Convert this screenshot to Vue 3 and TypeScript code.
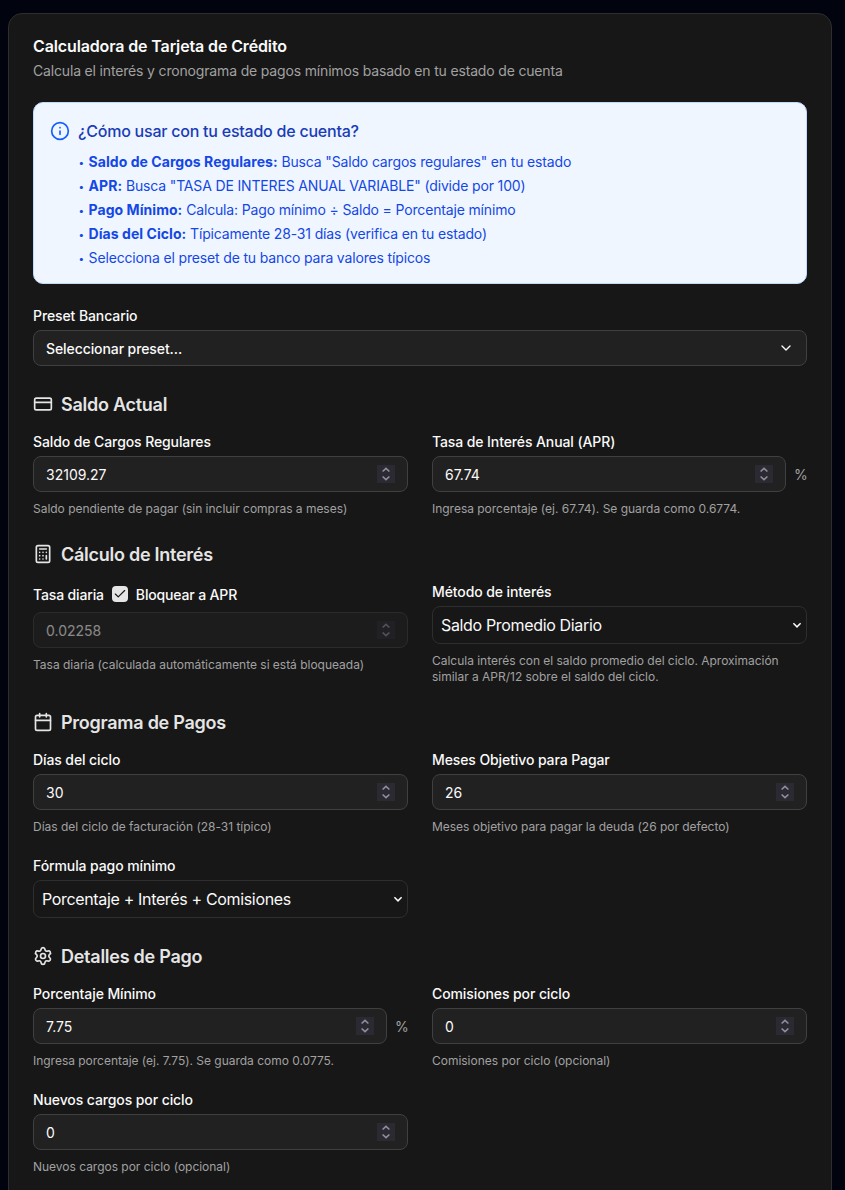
<script setup lang="ts">
import { ref } from 'vue'

interface Tip {
  term?: string
  text: string
}

interface Field {
  id: string
  label: string
  hint?: string
  value: string
  kind: 'number' | 'select'
  percent?: boolean
  locked?: boolean
}

interface Section {
  icon: 'card' | 'calculator' | 'calendar' | 'settings'
  title: string
  fields: Field[]
}

const tips: Tip[] = [
  { term: 'Saldo de Cargos Regulares:', text: 'Busca "Saldo cargos regulares" en tu estado' },
  { term: 'APR:', text: 'Busca "TASA DE INTERES ANUAL VARIABLE" (divide por 100)' },
  { term: 'Pago Mínimo:', text: 'Calcula: Pago mínimo ÷ Saldo = Porcentaje mínimo' },
  { term: 'Días del Ciclo:', text: 'Típicamente 28-31 días (verifica en tu estado)' },
  { text: 'Selecciona el preset de tu banco para valores típicos' },
]

const locked = ref(true)

const sections = ref<Section[]>([
  {
    icon: 'card',
    title: 'Saldo Actual',
    fields: [
      { id: 'balance', label: 'Saldo de Cargos Regulares', value: '32109.27', kind: 'number', hint: 'Saldo pendiente de pagar (sin incluir compras a meses)' },
      { id: 'apr', label: 'Tasa de Interés Anual (APR)', value: '67.74', kind: 'number', percent: true, hint: 'Ingresa porcentaje (ej. 67.74). Se guarda como 0.6774.' },
    ],
  },
  {
    icon: 'calculator',
    title: 'Cálculo de Interés',
    fields: [
      { id: 'daily', label: 'Tasa diaria', value: '0.02258', kind: 'number', locked: true, hint: 'Tasa diaria (calculada automáticamente si está bloqueada)' },
      { id: 'method', label: 'Método de interés', value: 'Saldo Promedio Diario', kind: 'select', hint: 'Calcula interés con el saldo promedio del ciclo. Aproximación similar a APR/12 sobre el saldo del ciclo.' },
    ],
  },
  {
    icon: 'calendar',
    title: 'Programa de Pagos',
    fields: [
      { id: 'days', label: 'Días del ciclo', value: '30', kind: 'number', hint: 'Días del ciclo de facturación (28-31 típico)' },
      { id: 'months', label: 'Meses Objetivo para Pagar', value: '26', kind: 'number', hint: 'Meses objetivo para pagar la deuda (26 por defecto)' },
      { id: 'formula', label: 'Fórmula pago mínimo', value: 'Porcentaje + Interés + Comisiones', kind: 'select' },
    ],
  },
  {
    icon: 'settings',
    title: 'Detalles de Pago',
    fields: [
      { id: 'minimum', label: 'Porcentaje Mínimo', value: '7.75', kind: 'number', percent: true, hint: 'Ingresa porcentaje (ej. 7.75). Se guarda como 0.0775.' },
      { id: 'fees', label: 'Comisiones por ciclo', value: '0', kind: 'number', hint: 'Comisiones por ciclo (opcional)' },
      { id: 'charges', label: 'Nuevos cargos por ciclo', value: '0', kind: 'number', hint: 'Nuevos cargos por ciclo (opcional)' },
    ],
  },
])
</script>

<template>
  <main class="page">
    <section class="card">
      <header class="card-header">
        <h1 class="title">Calculadora de Tarjeta de Crédito</h1>
        <p class="subtitle">Calcula el interés y cronograma de pagos mínimos basado en tu estado de cuenta</p>
      </header>

      <aside class="info">
        <svg class="icon" viewBox="0 0 24 24"><circle cx="12" cy="12" r="10" /><path d="M12 16v-4M12 8h.01" /></svg>
        <div class="info-body">
          <h2 class="info-title">¿Cómo usar con tu estado de cuenta?</h2>
          <ul class="tips">
            <li v-for="tip in tips" :key="tip.text"><span class="bullet">•</span> <strong v-if="tip.term">{{ tip.term }}</strong>{{ tip.term ? ' ' : '' }}{{ tip.text }}</li>
          </ul>
        </div>
      </aside>

      <div class="field">
        <label class="label">Preset Bancario</label>
        <button class="control preset" type="button">
          <span>Seleccionar preset...</span>
          <svg class="chevron" viewBox="0 0 24 24"><path d="m6 9 6 6 6-6" /></svg>
        </button>
      </div>

      <section v-for="section in sections" :key="section.title" class="group">
        <h3 class="group-title">
          <svg class="icon" viewBox="0 0 24 24">
            <template v-if="section.icon === 'card'">
              <rect width="20" height="14" x="2" y="5" rx="2" /><path d="M2 10h20" />
            </template>
            <template v-else-if="section.icon === 'calculator'">
              <rect width="16" height="20" x="4" y="2" rx="2" />
              <path d="M8 6h8M16 14v4M16 10h.01M12 10h.01M8 10h.01M12 14h.01M8 14h.01M12 18h.01M8 18h.01" />
            </template>
            <template v-else-if="section.icon === 'calendar'">
              <path d="M8 2v4M16 2v4M3 10h18" /><rect width="18" height="18" x="3" y="4" rx="2" />
            </template>
            <template v-else>
              <path d="M9.671 4.136a2.34 2.34 0 0 1 4.659 0 2.34 2.34 0 0 0 3.319 1.915 2.34 2.34 0 0 1 2.33 4.033 2.34 2.34 0 0 0 0 3.831 2.34 2.34 0 0 1-2.33 4.033 2.34 2.34 0 0 0-3.319 1.915 2.34 2.34 0 0 1-4.659 0 2.34 2.34 0 0 0-3.32-1.915 2.34 2.34 0 0 1-2.33-4.033 2.34 2.34 0 0 0 0-3.831A2.34 2.34 0 0 1 6.35 6.051a2.34 2.34 0 0 0 3.319-1.915" />
              <circle cx="12" cy="12" r="3" />
            </template>
          </svg>
          <span class="group-text">{{ section.title }}</span>
        </h3>

        <div class="grid">
          <div v-for="field in section.fields" :key="field.id" class="field">
            <div v-if="field.locked" class="lock-row">
              <label class="label" :for="field.id">{{ field.label }}</label>
              <button class="checkbox" type="button" role="checkbox" :aria-checked="locked" @click="locked = !locked">
                <svg v-if="locked" viewBox="0 0 24 24"><path d="M20 6 9 17l-5-5" /></svg>
              </button>
              <span class="label">Bloquear a APR</span>
            </div>
            <label v-else class="label" :for="field.id">{{ field.label }}</label>

            <div v-if="field.kind === 'number'" class="number-row">
              <div class="control number" :class="{ disabled: field.locked && locked }">
                <input :id="field.id" v-model="field.value" class="input" inputmode="decimal" :disabled="field.locked && locked" />
                <span class="spinner">
                  <svg viewBox="0 0 18 18"><path d="M5.6 6.5 9 3.4l3.4 3.1M5.6 11.5 9 14.6l3.4-3.1" /></svg>
                </span>
              </div>
              <span v-if="field.percent" class="percent">%</span>
            </div>
            <div v-else class="select-wrap">
              <select :id="field.id" v-model="field.value" class="select">
                <option>{{ field.value }}</option>
              </select>
              <svg class="select-arrow" viewBox="0 0 10 10"><path d="M1.4 3.3 5 6.9l3.6-3.6" /></svg>
            </div>

            <p v-if="field.hint" class="hint">{{ field.hint }}</p>
          </div>
        </div>
      </section>
    </section>
  </main>
</template>

<style>
html,
body {
  background: #01040f;
}
</style>

<style scoped>
.page {
  box-sizing: border-box;
  height: 1190px;
  overflow: hidden;
  padding: 13px 13px 0 8px;
  background: #01040f;
  color: #fafafa;
  font-family: Inter, "Liberation Sans", sans-serif;
  font-size: 14px;
}
.page *,
.page *::before {
  box-sizing: border-box;
}
h1, h2, h3, p, ul {
  margin: 0;
  padding: 0;
}
.card {
  display: flex;
  flex-direction: column;
  gap: 24px;
  min-height: 1260px;
  padding: 24px;
  border: 1px solid #2e2e2e;
  border-radius: 14px;
  background: #171717;
}
.card-header {
  display: flex;
  flex-direction: column;
  gap: 7px;
  height: 40px;
}
.title {
  font-size: 16px;
  font-weight: 600;
  line-height: 16px;
  letter-spacing: -0.13px;
}
.subtitle {
  color: #a1a1a1;
  line-height: 20px;
  letter-spacing: -0.165px;
}
.info {
  display: flex;
  gap: 8px;
  height: 182px;
  padding: 16px;
  border: 1px solid #bedbff;
  border-radius: 10px;
  background: #eff6ff;
  color: #155dfc;
}
.icon {
  flex: none;
  width: 20px;
  height: 20px;
  fill: none;
  stroke: currentColor;
  stroke-width: 2;
  stroke-linecap: round;
  stroke-linejoin: round;
}
.info .icon {
  margin-top: 2px;
}
.info-title {
  color: #193cb8;
  font-size: 16px;
  font-weight: 500;
  line-height: 24px;
  letter-spacing: -0.23px;
}
.tips {
  display: flex;
  flex-direction: column;
  gap: 4px;
  margin-top: 9px;
  list-style: none;
  color: #1447e6;
  line-height: 20px;
  letter-spacing: -0.155px;
}
.tips li {
  height: 20px;
}
.tips strong {
  font-weight: 700;
  letter-spacing: 0.05px;
}
.bullet {
  display: inline-block;
  width: 6.8px;
  padding-left: 0.5px;
  font-size: 10px;
  line-height: 14px;
  vertical-align: 1px;
}
.field {
  display: flex;
  flex-direction: column;
  gap: 8px;
  min-width: 0;
}
.label {
  height: 14px;
  font-weight: 500;
  line-height: 16px;
  letter-spacing: -0.1px;
}
.control {
  display: flex;
  align-items: center;
  justify-content: space-between;
  width: 100%;
  height: 36px;
  padding: 0 12px;
  border: 1px solid #404040;
  border-radius: 8px;
  background: #212121;
  color: #fafafa;
}
.preset {
  font: inherit;
  font-weight: 500;
  letter-spacing: -0.09px;
}
.chevron {
  width: 16px;
  height: 16px;
  fill: none;
  stroke: #fafafa;
  stroke-width: 2;
  stroke-linecap: round;
  stroke-linejoin: round;
}
.group {
  display: flex;
  flex-direction: column;
  gap: 16px;
}
.group-title {
  display: flex;
  align-items: center;
  gap: 8px;
  height: 28px;
  color: #e5e5e5;
  font-size: 18px;
  font-weight: 600;
  line-height: 28px;
  letter-spacing: -0.26px;
}
.group-text {
  padding-top: 2px;
}
.grid {
  display: grid;
  grid-template-columns: 1fr 1fr;
  align-items: start;
  gap: 24px;
}
.lock-row {
  display: flex;
  align-items: center;
  gap: 8px;
  height: 20px;
}
.lock-row .label {
  letter-spacing: -0.15px;
}
.checkbox {
  display: grid;
  place-items: center;
  width: 16px;
  height: 16px;
  padding: 0;
  border: 0;
  border-radius: 4px;
  background: #e5e5e5;
}
.checkbox svg {
  width: 14px;
  height: 14px;
  fill: none;
  stroke: #171717;
  stroke-width: 2;
  stroke-linecap: round;
  stroke-linejoin: round;
}
.number-row {
  display: flex;
  align-items: center;
  gap: 8px;
}
.number {
  flex: 1;
  min-width: 0;
}
.disabled {
  opacity: 0.5;
}
.input {
  flex: 1;
  min-width: 0;
  height: 20px;
  padding: 0;
  border: 0;
  outline: 0;
  background: transparent;
  color: #fafafa;
  font: inherit;
}
.spinner {
  width: 18px;
  height: 18px;
  background: #2b2a33;
}
.spinner svg {
  display: block;
  width: 18px;
  height: 18px;
  fill: none;
  stroke: #8f8f9d;
  stroke-width: 1.6;
}
.percent {
  width: 13px;
  color: #a1a1a1;
}
.select-wrap {
  display: grid;
  align-items: center;
  justify-items: end;
}
.select-wrap > * {
  grid-area: 1 / 1;
}
.select {
  width: 100%;
  height: 38px;
  padding: 0 8px;
  border: 1px solid #2e2e2e;
  border-radius: 8px;
  outline: 0;
  appearance: none;
  background: #171717;
  color: #fafafa;
  font: inherit;
  font-size: 16px;
  letter-spacing: -0.34px;
}
.select-arrow {
  width: 10px;
  height: 10px;
  margin-right: 5px;
  fill: none;
  stroke: #fafafa;
  stroke-width: 1.5;
  pointer-events: none;
}
.hint {
  margin: 1px 0 -1px;
  color: #a1a1a1;
  font-size: 12px;
  line-height: 16px;
  letter-spacing: -0.02px;
}
</style>
